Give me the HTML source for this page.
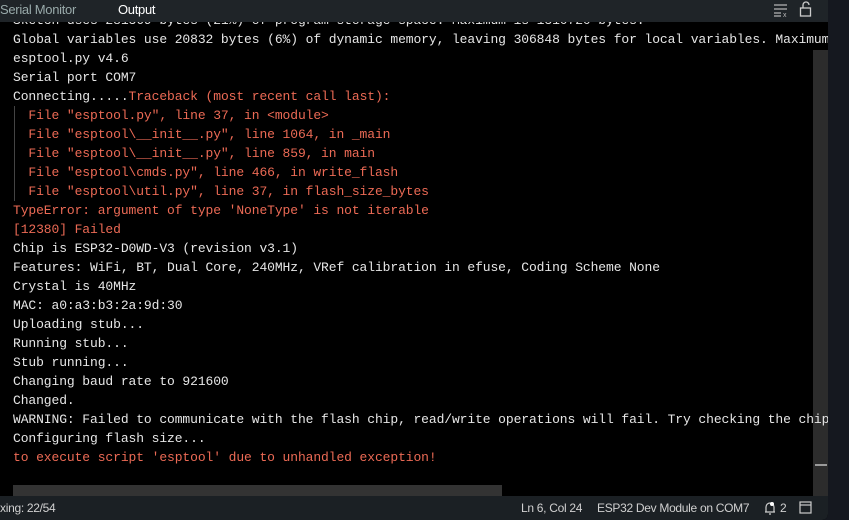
<!DOCTYPE html>
<html><head><meta charset="utf-8"><style>
html,body{margin:0;padding:0;width:849px;height:520px;overflow:hidden;background:#15181f;}
#main{position:absolute;left:0;top:0;width:828px;height:520px;background:#000;overflow:hidden;border-bottom-right-radius:6px}
#hdr{position:absolute;left:0;top:0;width:828px;height:22px;background:#1f2428;z-index:5;font-family:"Liberation Sans",sans-serif;font-size:13px;color:#aaa}
#hdr span{position:absolute;top:2px;letter-spacing:-0.3px}
#out{position:absolute;left:13px;top:11px;font-family:"Liberation Mono",monospace;font-size:13px;letter-spacing:-0.1px;line-height:19px;color:#e6e6e6;white-space:pre;z-index:4}
.r{color:#ec6a55}
#guide{position:absolute;left:14px;top:106px;width:1px;height:95px;background:#444;z-index:2}
#vs{position:absolute;left:813px;top:50px;width:15px;height:446px;background:#2c2c2c;z-index:2}
#thumb{position:absolute;left:815px;top:464px;width:12px;height:2px;background:#9a9a9a;z-index:3}
#hs{position:absolute;left:13px;top:485px;width:489px;height:11px;background:#333;z-index:2}
#sb{position:absolute;left:0;top:496px;width:828px;height:24px;background:#1b2024;z-index:5;font-family:"Liberation Sans",sans-serif;font-size:12px;color:#d0d0d0;border-bottom-right-radius:6px}
#sb span{position:absolute;top:5px;letter-spacing:-0.3px}
</style></head><body>
<div id="main">
<div id="hdr"><span style="left:0;color:#9aa">Serial Monitor</span><span style="color:#fff;left:118px">Output</span>
<svg style="position:absolute;left:773px;top:3px" width="16" height="14" viewBox="0 0 16 14"><g stroke="#bbb" stroke-width="1.2"><line x1="1" y1="2" x2="14" y2="2"/><line x1="1" y1="6" x2="14" y2="6"/><line x1="1" y1="10" x2="8" y2="10"/><line x1="1" y1="13" x2="8" y2="13"/></g><text x="10" y="14" font-size="7" fill="#bbb" font-family="Liberation Sans">x</text></svg>
<svg style="position:absolute;left:799px;top:1px" width="14" height="16" viewBox="0 0 14 16"><rect x="1.5" y="7" width="10" height="8" fill="none" stroke="#ccc" stroke-width="1.3"/><path d="M4 7V4a3 3 0 0 1 6 0" fill="none" stroke="#ccc" stroke-width="1.3"/></svg>
</div>
<div id="out">Sketch uses 281369 bytes (21%) of program storage space. Maximum is 1310720 bytes.
Global variables use 20832 bytes (6%) of dynamic memory, leaving 306848 bytes for local variables. Maximum is 327680 bytes.
esptool.py v4.6
Serial port COM7
Connecting.....<span class="r">Traceback (most recent call last):</span>
<span class="r">  File "esptool.py", line 37, in &lt;module&gt;</span>
<span class="r">  File "esptool\__init__.py", line 1064, in _main</span>
<span class="r">  File "esptool\__init__.py", line 859, in main</span>
<span class="r">  File "esptool\cmds.py", line 466, in write_flash</span>
<span class="r">  File "esptool\util.py", line 37, in flash_size_bytes</span>
<span class="r">TypeError: argument of type 'NoneType' is not iterable</span>
<span class="r">[12380] Failed</span>
Chip is ESP32-D0WD-V3 (revision v3.1)
Features: WiFi, BT, Dual Core, 240MHz, VRef calibration in efuse, Coding Scheme None
Crystal is 40MHz
MAC: a0:a3:b3:2a:9d:30
Uploading stub...
Running stub...
Stub running...
Changing baud rate to 921600
Changed.
WARNING: Failed to communicate with the flash chip, read/write operations will fail. Try checking the chip
Configuring flash size...
<span class="r">to execute script 'esptool' due to unhandled exception!</span></div>
<div id="guide"></div>
<div id="vs"></div><div id="thumb"></div>
<div id="hs"></div>
<div id="sb"><span style="left:0">xing: 22/54</span><span style="left:521px">Ln 6, Col 24</span><span style="left:597px">ESP32 Dev Module on COM7</span>
<svg style="position:absolute;left:763px;top:5px" width="14" height="14" viewBox="0 0 14 14"><path d="M3 11V6a4 4 0 0 1 8 0v5M2 11h10M6 13h2" fill="none" stroke="#ccc" stroke-width="1.2"/><circle cx="9" cy="3" r="2" fill="#fff"/></svg>
<span style="left:780px">2</span>
<svg style="position:absolute;left:799px;top:5px" width="13" height="13" viewBox="0 0 13 13"><rect x="1" y="1" width="11" height="11" fill="none" stroke="#ccc" stroke-width="1.2"/><line x1="1" y1="4" x2="12" y2="4" stroke="#ccc" stroke-width="1.2"/></svg>
</div>
</div>
</body></html>
